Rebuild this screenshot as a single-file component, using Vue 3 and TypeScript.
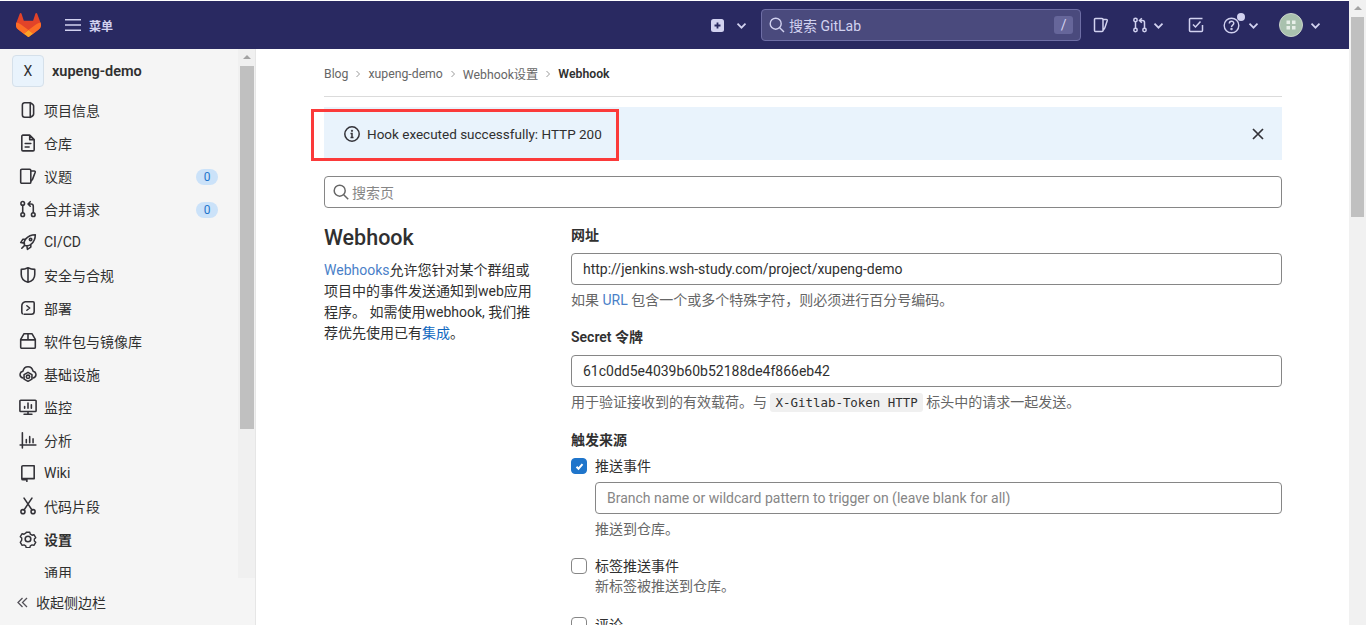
<script setup lang="ts">
interface Item { key: string; label: string; badge?: string; strong?: boolean; sub?: boolean }
const items: Item[] = [
  { key: 'project', label: '项目信息' },
  { key: 'doc', label: '仓库' },
  { key: 'issues', label: '议题', badge: '0' },
  { key: 'merge', label: '合并请求', badge: '0' },
  { key: 'rocket', label: 'CI/CD' },
  { key: 'shield', label: '安全与合规' },
  { key: 'deploy', label: '部署' },
  { key: 'package', label: '软件包与镜像库' },
  { key: 'cloud', label: '基础设施' },
  { key: 'monitor', label: '监控' },
  { key: 'chart', label: '分析' },
  { key: 'book', label: 'Wiki' },
  { key: 'snippet', label: '代码片段' },
  { key: 'gear', label: '设置', strong: true },
  { key: 'none', label: '通用', sub: true },
]
const crumbs = ['Blog', 'xupeng-demo', 'Webhook设置']
</script>

<template>
  <div class="page">
    <div class="main">
      <header class="nav">
        <svg class="logo" width="25" height="24" viewBox="0 0 25 24">
          <path fill="#E24329" d="M24.507 9.5l-.034-.09L21.082.562a.896.896 0 00-1.694.091l-2.29 7.01H7.825L5.535.653a.898.898 0 00-1.694-.09L.451 9.411.416 9.5a6.297 6.297 0 002.09 7.278l.012.01.03.022 5.16 3.867 2.56 1.935 1.554 1.176a1.051 1.051 0 001.268 0l1.555-1.176 2.56-1.935 5.197-3.89.014-.01A6.297 6.297 0 0024.507 9.5z" />
          <path fill="#FC6D26" d="M24.507 9.5l-.034-.09a11.44 11.44 0 00-4.56 2.051l-7.447 5.632 4.742 3.584 5.197-3.89.014-.01A6.297 6.297 0 0024.507 9.5z" />
          <path fill="#FCA326" d="M7.707 20.677l2.56 1.935 1.555 1.176a1.051 1.051 0 001.268 0l1.555-1.176 2.56-1.935-4.743-3.584-4.755 3.584z" />
          <path fill="#FC6D26" d="M5.01 11.461a11.43 11.43 0 00-4.56-2.05L.416 9.5a6.297 6.297 0 002.09 7.278l.012.01.03.022 5.16 3.867 4.745-3.584-7.444-5.632z" />
        </svg>
        <button class="menu-btn">
          <svg width="16" height="16" viewBox="0 0 16 16" fill="none" stroke="#d2d2f0" stroke-width="1.500"><path d="M0 2.750h16M0 8h16M0 13.250h16" /></svg>
          <span>菜单</span>
        </button>
        <div class="new-btn">
          <svg width="13" height="13" viewBox="0 0 13 13"><rect width="13" height="13" rx="2.500" fill="#d2d2f0" /><path d="M6.500 3.500v6M3.500 6.500h6" stroke="#292961" stroke-width="1.800" /></svg>
          <svg class="chev" width="11" height="11" viewBox="0 0 11 11" fill="none" stroke="#d2d2f0" stroke-width="1.700"><path d="m1.500 3.700 4 4 4-4" /></svg>
        </div>
        <div class="nav-search">
          <svg width="16" height="16" viewBox="0 0 16 16" fill="none" stroke="#d2d2f0" stroke-width="1.400"><circle cx="6.700" cy="6.700" r="5.500" /><path d="m10.700 10.700 4.300 4.300" /></svg>
          <span class="nav-search-text">搜索 GitLab</span>
          <kbd class="slash">/</kbd>
        </div>
        <svg class="nav-issues" width="16" height="16" viewBox="0 0 16 16" fill="none" stroke="#d2d2f0" stroke-width="1.500"><path d="M2.500 1.500h6.500a1 1 0 0 1 1 1v11a1 1 0 0 1-1 1H2.500a1 1 0 0 1-1-1v-11a1 1 0 0 1 1-1zM10 2.500h3.200c.8 0 1.200.5 1 1.200L11.800 11 10 13.500" /></svg>
        <div class="nav-mr">
          <svg width="16" height="16" viewBox="0 0 16 16" fill="none" stroke="#d2d2f0" stroke-width="1.500"><circle cx="3.500" cy="3" r="1.700" /><circle cx="3.500" cy="13" r="1.700" /><circle cx="12.500" cy="13" r="1.700" /><path d="M3.500 4.700v6.600M12.500 11.300V5.500a2 2 0 0 0-2-2H8M9.800 1.200 7.500 3.500l2.300 2.300" /></svg>
          <svg class="chev" width="11" height="11" viewBox="0 0 11 11" fill="none" stroke="#d2d2f0" stroke-width="1.700"><path d="m1.500 3.700 4 4 4-4" /></svg>
        </div>
        <svg class="nav-todo" width="16" height="16" viewBox="0 0 16 16" fill="none" stroke="#d2d2f0" stroke-width="1.500"><path d="M14.500 8v5.500a1 1 0 0 1-1 1h-11a1 1 0 0 1-1-1v-11a1 1 0 0 1 1-1h12" /><path d="m5 7.500 2.500 2.500 5-5.500" /></svg>
        <div class="nav-help">
          <svg width="18" height="18" viewBox="0 0 18 18" fill="none" stroke="#d2d2f0" stroke-width="1.400"><circle cx="8.500" cy="9.500" r="7.300" /><path d="M6.300 7.600c0-3 4.500-3 4.500-.3 0 1.800-2.300 1.800-2.300 3.700" /><circle cx="8.500" cy="13" r=".5" /></svg>
          <span class="help-dot"></span>
          <svg class="chev" width="11" height="11" viewBox="0 0 11 11" fill="none" stroke="#d2d2f0" stroke-width="1.700"><path d="m1.500 3.700 4 4 4-4" /></svg>
        </div>
        <div class="nav-user">
          <svg width="24" height="24" viewBox="0 0 24 24"><circle cx="12" cy="12" r="11.500" fill="#a9c1ae" stroke="#c9d2cb" /><g fill="#e8efe9"><rect x="7.500" y="7.500" width="3.500" height="3.500" /><rect x="13" y="7.500" width="3.500" height="3.500" /><rect x="7.500" y="13" width="3.500" height="3.500" /><rect x="13" y="13" width="3.500" height="3.500" /></g></svg>
          <svg class="chev" width="11" height="11" viewBox="0 0 11 11" fill="none" stroke="#d2d2f0" stroke-width="1.700"><path d="m1.500 3.700 4 4 4-4" /></svg>
        </div>
      </header>

      <div class="body">
        <aside class="side">
          <div class="side-top">
            <div class="side-list">
              <div class="ctx">
                <span class="ctx-avatar">X</span>
                <span class="ctx-name">xupeng-demo</span>
              </div>
              <div v-for="it in items" :key="it.label" class="row" :class="{ strong: it.strong }">
                <span class="row-icon">
                  <svg v-if="it.key !== 'none'" width="18" height="18" viewBox="0 0 16 16" fill="none" stroke="#333238" stroke-width="1.400" stroke-linecap="round" stroke-linejoin="round">
                    <template v-if="it.key === 'project'"><path d="M10 1.500H5a2 2 0 0 0-2 2v9a2 2 0 0 0 2 2h5zM10 1.500c1.800.800 3 1.500 3 3v7c0 1.500-1.200 2.200-3 3" /></template>
                    <template v-else-if="it.key === 'doc'"><path d="M9.500 1H3.500a1 1 0 0 0-1 1v12a1 1 0 0 0 1 1h9a1 1 0 0 0 1-1V5zM9.500 1v4h4M5.500 8.500h5M5.500 11.500h3.500" /></template>
                    <template v-else-if="it.key === 'issues'"><path d="M2.500 2h7a1 1 0 0 1 1 1v10.500a1 1 0 0 1-1 1h-7a1 1 0 0 1-1-1V3a1 1 0 0 1 1-1zM10.500 3.500h3c.8 0 1.100.6.900 1.200L12 11l-1.500 2" /></template>
                    <template v-else-if="it.key === 'merge'"><circle cx="3.300" cy="3" r="1.600" /><circle cx="3.300" cy="13" r="1.600" /><circle cx="12.700" cy="13" r="1.600" /><path d="M3.300 4.600v6.800M12.700 11.400V5.500a2 2 0 0 0-2-2H8.500M10 1.500l-2 2 2 2" /></template>
                    <template v-else-if="it.key === 'rocket'"><path d="M5 11c-.8-2-.5-4 1-5.800C8 3 11 1.500 14.500 1.500 14.500 5 13 8 10.800 10c-1.800 1.500-3.800 1.800-5.800 1zM6 5.500H3.500L1.500 8.500l3 .5M10.500 10v2.500l-3 2-.5-3M5 11l-2.500 2.500" /><circle cx="10.300" cy="5.700" r="1.100" /></template>
                    <template v-else-if="it.key === 'shield'"><path d="M8 1.500c2 1 4 1.500 6 1.500v4.500c0 3.500-2.500 6-6 7-3.500-1-6-3.500-6-7V3c2 0 4-.5 6-1.500zM8 1.500v13" /></template>
                    <template v-else-if="it.key === 'deploy'"><path d="M5.500 2.500h7a1 1 0 0 1 1 1v7.500a2.500 2.500 0 0 1-2.500 2.500H4.500M2.500 6.500v5a2 2 0 0 0 .5 1.500M2.500 6.500c0-2 1-3.500 3-4M7 6l2.500 2L7 10" /></template>
                    <template v-else-if="it.key === 'package'"><path d="M4.500 1.500h7l3 5v7a1 1 0 0 1-1 1h-11a1 1 0 0 1-1-1v-7zM1.500 7h13M8 1.500V7" /></template>
                    <template v-else-if="it.key === 'cloud'"><path d="M3.500 11.500C1.500 11 .8 9.500 1 8c.2-1.300 1.200-2.300 2.500-2.500C4 3 6 1.500 8 1.500s4 1.500 4.500 4c1.300.2 2.300 1.200 2.500 2.500.2 1.500-.5 3-2.500 3.500" /><circle cx="8" cy="10.500" r="1.500" /><path d="M8 6.500 11.500 8.500v4L8 14.500l-3.500-2v-4z" /></template>
                    <template v-else-if="it.key === 'monitor'"><path d="M1.500 2h13a.700.700 0 0 1 .700.700v8.600a.700.700 0 0 1-.700.700h-13a.700.700 0 0 1-.700-.700V2.700A.700.700 0 0 1 1.500 2zM8 12v2.500M4.500 14.500h7M5 9V7.500M8 9V4.500M11 9V6" /></template>
                    <template v-else-if="it.key === 'chart'"><path d="M1 12.500h14M3 1.500v13.500M6.500 10.500V7.500M9.500 10.500V5M12.500 10.500V7" /></template>
                    <template v-else-if="it.key === 'book'"><path d="M13.500 1.500H3.500a1 1 0 0 0-1 1v10.500h11zM2.500 11.500v1.500a1 1 0 0 0 1 1h2.500M7 13v2.500M7 13h6.500" /></template>
                    <template v-else-if="it.key === 'snippet'"><circle cx="3.500" cy="13" r="1.800" /><circle cx="12.500" cy="13" r="1.800" /><path d="M4.500 11.500 11.500 1M11.500 11.500 4.500 1" /></template>
                    <template v-else-if="it.key === 'gear'"><circle cx="8" cy="8" r="2.500" /><path d="M6.200 1.300h3.600l.5 1.900 1.700 1 1.900-.5 1.800 3-1.400 1.300v2l1.400 1.300-1.800 3-1.900-.5-1.700 1-.5 1.900H6.200l-.5-1.900-1.700-1-1.900.5-1.800-3L1.700 9V7L.3 5.700l1.800-3 1.900.5 1.700-1z" transform="translate(.9 .9) scale(.89)" /></template>
                  </svg>
                </span>
                <span class="row-label">{{ it.label }}</span>
                <span v-if="it.badge" class="row-badge">{{ it.badge }}</span>
              </div>
            </div>
            <div class="side-bar">
              <span class="arrow-up"></span>
              <span class="side-thumb"></span>
            </div>
          </div>
          <div class="collapse">
            <svg width="13" height="13" viewBox="0 0 13 13" fill="none" stroke="#535158" stroke-width="1.300"><path d="M6.500 2 2 6.500 6.500 11M11 2 6.500 6.500 11 11" /></svg>
            <span>收起侧边栏</span>
          </div>
        </aside>

        <main class="content">
          <nav class="crumbs">
            <template v-for="c in crumbs" :key="c">
              <span>{{ c }}</span>
              <svg width="8" height="8" viewBox="0 0 8 8" fill="none" stroke="#9a9a9a" stroke-width="1"><path d="m2.500 1 3 3-3 3" /></svg>
            </template>
            <b>Webhook</b>
          </nav>

          <div class="alert">
            <svg width="16" height="16" viewBox="0 0 16 16" fill="none" stroke="#333238" stroke-width="1.500"><circle cx="8" cy="8" r="7.200" /><path d="M6.500 7.500H8v4M6.500 11.500h3" /><circle cx="8" cy="4.800" r=".4" /></svg>
            <span class="alert-text">Hook executed successfully: HTTP 200</span>
            <svg class="alert-x" width="12" height="12" viewBox="0 0 12 12" fill="none" stroke="#333238" stroke-width="1.700"><path d="m1 1 10 10M11 1 1 11" /></svg>
            <span class="annot"></span>
          </div>

          <div class="page-search">
            <svg width="16" height="16" viewBox="0 0 16 16" fill="none" stroke="#666" stroke-width="1.500"><circle cx="6.700" cy="6.700" r="5.500" /><path d="m10.700 10.700 4.500 4.500" /></svg>
            <span>搜索页</span>
          </div>

          <div class="columns">
            <section class="intro">
              <h2>Webhook</h2>
              <p><a class="lnk-light">Webhooks</a>允许您针对某个群组或项目中的事件发送通知到web应用程序。 如需使用webhook, 我们推荐优先使用已有<a class="lnk">集成</a>。</p>
            </section>
            <section class="form">
              <label class="lab lab-first">网址</label>
              <div class="inp">http://jenkins.wsh-study.com/project/xupeng-demo</div>
              <div class="hint">如果 <a class="lnk-light">URL</a> 包含一个或多个特殊字符，则必须进行百分号编码。</div>

              <label class="lab lab-next">Secret 令牌</label>
              <div class="inp">61c0dd5e4039b60b52188de4f866eb42</div>
              <div class="hint">用于验证接收到的有效载荷。与 <code>X-Gitlab-Token HTTP</code> 标头中的请求一起发送。</div>

              <label class="lab lab-trig">触发来源</label>
              <div class="check check-first">
                <span class="box on"><svg width="11" height="11" viewBox="0 0 11 11" fill="none" stroke="#fff" stroke-width="2"><path d="m2.500 5.700 2 2 4-4.500" /></svg></span>
                <span>推送事件</span>
              </div>
              <div class="sub">
                <div class="inp ph">Branch name or wildcard pattern to trigger on (leave blank for all)</div>
                <div class="hint">推送到仓库。</div>
              </div>
              <div class="check check-tag">
                <span class="box"></span>
                <span>标签推送事件</span>
              </div>
              <div class="sub"><div class="hint hint-tag">新标签被推送到仓库。</div></div>
              <div class="check check-note">
                <span class="box"></span>
                <span>评论</span>
              </div>
            </section>
          </div>
        </main>
      </div>
    </div>
    <div class="page-bar">
      <span class="arrow-up"></span>
      <span class="page-thumb"></span>
    </div>
  </div>
</template>

<style>
html, body { margin: 0; overflow: hidden; background: #fff; }
</style>

<style scoped>
.page {
  display: flex;
  width: 1366px;
  height: 625px;
  overflow: hidden;
  font-family: Roboto, "Noto Sans CJK SC", sans-serif;
  font-size: 14px;
  color: #303030;
  background: #fff;
}
.main { width: 1349px; display: flex; flex-direction: column; }
.page-bar { width: 17px; background: #f1f1f1; display: flex; flex-direction: column; align-items: center; }
.arrow-up {
  width: 0; height: 0; margin-top: 6px;
  border-left: 4px solid transparent; border-right: 4px solid transparent; border-bottom: 4px solid #a3a3a3;
}
.page-thumb { width: 13px; height: 200px; margin-top: 7px; background: #c0c0c0; }

.nav {
  height: 48px; margin-top: 1px; background: #292961; display: flex; align-items: center; color: #d2d2f0; flex: none;
}
.logo { margin-left: 16px; }
.menu-btn {
  display: flex; align-items: center; gap: 8px; margin-left: 24px; padding: 0; border: 0; background: none;
  color: #d2d2f0; font: 600 12px Roboto, "Noto Sans CJK SC", sans-serif;
}
.new-btn { display: flex; align-items: center; gap: 12px; margin-left: 598px; }
.nav-search {
  box-sizing: border-box; width: 320px; height: 32px; margin-left: 14px; padding: 0 7px; border: 1px solid #6e6ea5; border-radius: 4px;
  background: #4a4a7d; display: flex; align-items: center; gap: 4px; color: #d2d2f0;
}
.nav-search-text { flex: 1; font-size: 14px; }
.slash {
  width: 19px; height: 18px; border-radius: 3px; background: #66669a; color: #d2d2f0; font: 14px Roboto, sans-serif;
  display: flex; align-items: center; justify-content: center;
}
.nav-issues { margin-left: 12px; }
.nav-mr { display: flex; align-items: center; gap: 5px; margin-left: 23px; }
.nav-todo { margin-left: 24px; }
.nav-help { display: flex; align-items: center; gap: 7px; margin-left: 19px; position: relative; }
.help-dot { position: absolute; left: 14px; top: -3px; width: 8px; height: 8px; border-radius: 50%; background: #d2d2f0; }
.nav-user { display: flex; align-items: center; gap: 7px; margin-left: 20px; }

.body { flex: 1; display: flex; min-height: 0; }
.side { width: 255px; flex: none; border-right: 1px solid #e6e6e6; background: #f5f5f5; display: flex; flex-direction: column; }
.side-top { flex: 1; min-height: 0; display: flex; }
.side-list { flex: 1; min-width: 0; overflow: hidden; }
.side-bar { width: 17px; background: #f0f0f0; display: flex; flex-direction: column; align-items: center; }
.side-thumb { width: 14px; height: 363px; margin-top: 7px; background: #c0c0c0; }
.ctx { height: 32px; padding: 6px 0 0 12px; margin-bottom: 6px; display: flex; align-items: center; gap: 8px; }
.ctx-avatar {
  box-sizing: border-box; width: 32px; height: 32px; border: 1px solid #d5e0ea; border-radius: 4px; background: #e9f3fc;
  display: flex; align-items: center; justify-content: center; font-size: 14px; color: #303030;
}
.ctx-name { font-weight: 600; font-size: 14.500px; }
.row { height: 33px; display: flex; align-items: center; color: #303030; }
.row-icon { width: 18px; margin: 1px 7px 0 19px; height: 18px; display: flex; }
.row-label { flex: 1; }
.row-badge {
  width: 22px; height: 16px; margin: 2px 20px 0 0; border-radius: 8px; background: #cbe2f9; color: #1f75cb; font-size: 12px;
  display: flex; align-items: center; justify-content: center;
}
.strong .row-label { font-weight: 600; }
.collapse { height: 47px; flex: none; display: flex; align-items: center; gap: 7px; padding: 1px 0 0 16px; font-size: 14px; box-sizing: border-box; }

.content { flex: 1; min-width: 0; padding: 0 67px 0 68px; overflow: hidden; }
.crumbs { height: 48px; padding-top: 2px; box-sizing: border-box; border-bottom: 1px solid #dbdbdb; display: flex; align-items: center; gap: 6px; font-size: 12.250px; color: #666; }
.crumbs b { color: #303030; font-weight: 600; }
.alert {
  position: relative; height: 53px; margin-top: 10px; background: #e9f3fc; display: flex; align-items: center; padding-left: 20px; gap: 7px;
}
.alert-text { flex: 1; font-size: 13.500px; }
.alert-x { margin-right: 18px; }
.annot {
  position: absolute; left: -13px; top: 2px; width: 308px; height: 52px; box-sizing: border-box; border: 3px solid #fb3a3a; pointer-events: none;
}
.page-search {
  box-sizing: border-box; height: 32px; margin-top: 16px; border: 1px solid #868686; border-radius: 4px; display: flex; align-items: center;
  gap: 3px; padding-left: 8px; color: #868686;
}
.columns { display: flex; margin-top: 16px; }
.intro { width: 247px; flex: none; }
.intro h2 { margin: 0; font-size: 21.500px; font-weight: 500; line-height: 28px; color: #303030; }
.intro p { margin: 8px 0 0; width: 212px; line-height: 21px; }
.lnk-light { color: #4a7fc8; }
.lnk { color: #1068bf; }
.form { flex: 1; min-width: 0; }
.lab { display: block; font-weight: 600; line-height: 20px; font-size: 14px; }
.lab-first { margin-top: 1px; margin-bottom: 8px; }
.lab-next { margin-top: 17px; margin-bottom: 8px; }
.lab-trig { margin-top: 17px; margin-bottom: 6px; }
.inp {
  box-sizing: border-box; height: 32px; border: 1px solid #868686; border-radius: 4px; display: flex; align-items: center; padding: 0 11px; color: #303030;
}
.ph { color: #868686; }
.hint { color: #666; line-height: 20px; margin-top: 5px; }
code {
  font-family: "DejaVu Sans Mono", monospace; font-size: 12.450px; background: #f0f0f0; color: #303030; border-radius: 3px; padding: 2px 5px;
}
.check { display: flex; align-items: center; gap: 8px; line-height: 20px; }
.check-tag { margin-top: 17px; }
.check-note { margin-top: 19px; }
.box {
  box-sizing: border-box; width: 16px; height: 16px; border: 1px solid #868686; border-radius: 4px; background: #fff; display: flex; align-items: center; justify-content: center;
}
.box.on { background: #1f75cb; border-color: #1f75cb; }
.sub { margin-left: 24px; }
.check-first + .sub { margin-top: 6px; }
.hint-tag { margin-top: 0; }
</style>
